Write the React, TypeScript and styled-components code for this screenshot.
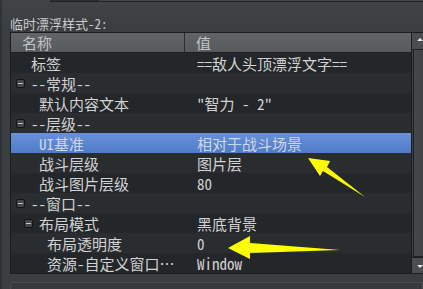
import React from 'react';
import styled, { createGlobalStyle } from 'styled-components';

const GlobalStyle = createGlobalStyle`
  html, body {
    margin: 0;
    padding: 0;
    width: 423px;
    height: 289px;
    overflow: hidden;
    background: #3b3e40;
  }
  * {
    box-sizing: border-box;
  }
`;

const FONT = `"Noto Sans Mono CJK SC", "Noto Sans CJK SC", "DejaVu Sans Mono", monospace`;

interface IProperty {
  name: string;
  value?: string;
  level: number;
  toggle?: boolean;
  selected?: boolean;
}

const properties: IProperty[] = [
  { name: '标签', value: '==敌人头顶漂浮文字==', level: 0 },
  { name: '--常规--', level: 0, toggle: true },
  { name: '默认内容文本', value: '"智力 - 2"', level: 1 },
  { name: '--层级--', level: 0, toggle: true },
  { name: 'UI基准', value: '相对于战斗场景', level: 1, selected: true },
  { name: '战斗层级', value: '图片层', level: 1 },
  { name: '战斗图片层级', value: '80', level: 1 },
  { name: '--窗口--', level: 0, toggle: true },
  { name: '布局模式', value: '黑底背景', level: 1, toggle: true },
  { name: '布局透明度', value: '0', level: 2 },
  { name: '资源-自定义窗口…', value: 'Window', level: 2 },
];

const Page = styled.div`
  position: relative;
  width: 423px;
  height: 289px;
  overflow: hidden;
  border-left: 2px solid #303335;
  background: linear-gradient(#414446, #3b3e40 30px);
  font-family: ${FONT};
`;

const TopStrip = styled.div`
  display: flex;
  height: 2px;
  padding-left: 48px;
`;

const TopTab = styled.div<{ $dark?: boolean }>`
  width: ${(p) => (p.$dark ? '49px' : 'auto')};
  flex: ${(p) => (p.$dark ? '0 0 auto' : '1')};
  background: ${(p) => (p.$dark ? '#2c2f31' : '#45484a')};
  border-bottom: 1px solid #1f2123;
`;

const Title = styled.div`
  height: 30px;
  padding: 14px 0 0 8px;
  font-size: 13px;
  line-height: 16px;
  color: #c9cbcd;
  white-space: nowrap;
`;

const Table = styled.div`
  display: grid;
  grid-template-columns: 401px 17px;
  margin-left: 8px;
  width: 430px;
  height: 242px;
  border: 1px solid #1b1d1f;
  background: #25282a;
`;

const Main = styled.div`
  display: flex;
  flex-direction: column;
  border-right: 1px solid #1b1d1f;
  overflow: hidden;
`;

const HeaderRow = styled.div`
  display: grid;
  grid-template-columns: 173px 1fr;
  height: 20px;
  border-bottom: 1px solid #1d1f21;
  background: linear-gradient(#626568, #575a5d);
`;

const HeaderCell = styled.div<{ $pad: number }>`
  padding-left: ${(p) => p.$pad}px;
  font-size: 15px;
  line-height: 19px;
  color: #c2c5c8;
  & + & {
    border-left: 1px solid #2b2d2f;
  }
`;

const Row = styled.div<{ $alt: boolean; $selected?: boolean }>`
  display: grid;
  grid-template-columns: 174px 1fr;
  height: 20px;
  background: ${(p) =>
    p.$selected
      ? 'linear-gradient(#6891d8, #4f7cc8)'
      : p.$alt
        ? '#2a2d30'
        : '#24272a'};
  color: ${(p) => (p.$selected ? '#cdd6e6' : '#d2d3d4')};
  font-size: 15px;
  line-height: 20px;
  white-space: nowrap;
`;

const NameCell = styled.div<{ $level: number }>`
  display: flex;
  align-items: center;
  padding: 1px 0 0 ${(p) => 5 + p.$level * 8}px;
  overflow: hidden;
`;

const ToggleSlot = styled.span`
  display: flex;
  align-items: center;
  flex: 0 0 15px;
  height: 100%;
`;

const Toggle = styled.span`
  position: relative;
  width: 9px;
  height: 9px;
  margin-top: 0px;
  border: 1px solid #111315;
  border-radius: 2px;
  background: #44474a;
  &::after {
    content: '';
    position: absolute;
    left: 1px;
    right: 1px;
    top: 3px;
    height: 1px;
    background: #c4c6c8;
  }
`;

const ValueCell = styled.div`
  padding: 1px 0 0 12px;
  overflow: hidden;
`;

const ScrollBar = styled.div`
  display: flex;
  flex-direction: column;
  background: #3f4245;
`;

const ScrollButton = styled.div<{ $down?: boolean }>`
  position: relative;
  height: 16px;
  flex: 0 0 16px;
  background: #4a4d50;
  border-top: ${(p) => (p.$down ? '1px solid #1d1f21' : 'none')};
  &::after {
    content: '';
    position: absolute;
    left: 5px;
    top: ${(p) => (p.$down ? '7px' : '5px')};
    border-left: 3px solid transparent;
    border-right: 3px solid transparent;
    ${(p) => (p.$down ? 'border-top: 3px solid #e6e6e6;' : 'border-bottom: 3px solid #e6e6e6;')}
  }
`;

const ScrollHandle = styled.div`
  flex: 1;
  margin-left: 1px;
  border: 1px solid #1d1f21;
  border-right: none;
  background: linear-gradient(90deg, #45484b, #3c3f42);
`;

const BottomPanel = styled.div`
  margin: 8px 0 0 8px;
  height: 20px;
  border: 1px solid #4a4d50;
  border-radius: 3px 0 0 0;
  background: #37393b;
`;

const Annotations = styled.svg`
  position: absolute;
  left: 0;
  top: 0;
  pointer-events: none;
`;

const App: React.FC = () => {
  return (
    <Page>
      <GlobalStyle />
      <TopStrip>
        <TopTab $dark />
        <TopTab />
      </TopStrip>
      <Title>临时漂浮样式-2:</Title>
      <Table>
        <Main>
          <HeaderRow>
            <HeaderCell $pad={11}>名称</HeaderCell>
            <HeaderCell $pad={11}>值</HeaderCell>
          </HeaderRow>
          {properties.map((prop, index) => (
            <Row key={`prop-${index}`} $alt={index % 2 === 1} $selected={prop.selected}>
              <NameCell $level={prop.level}>
                <ToggleSlot>{prop.toggle && <Toggle />}</ToggleSlot>
                {prop.name}
              </NameCell>
              <ValueCell>{prop.value}</ValueCell>
            </Row>
          ))}
        </Main>
        <ScrollBar>
          <ScrollButton />
          <ScrollHandle />
          <ScrollButton $down />
        </ScrollBar>
      </Table>
      <BottomPanel />
      <Annotations width="423" height="289" viewBox="0 0 423 289">
        <polygon
          points="306,158 328,161 325,167 363,197 321,171 318,176"
          fill="#ffff00"
        />
        <polygon
          points="226,248 248,236 248,243 338,250 248,253 248,259"
          fill="#ffff00"
        />
      </Annotations>
    </Page>
  );
};

export default App;
